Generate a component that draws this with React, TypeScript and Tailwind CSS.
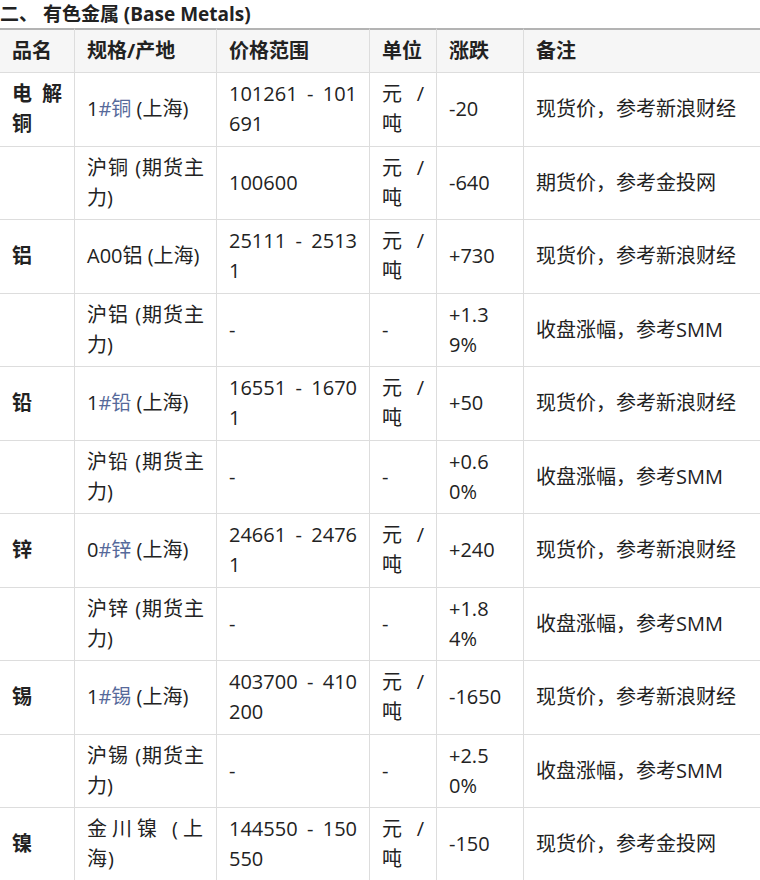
type Row = {
  name: string;
  spec: React.ReactNode;
  price: string;
  unit: string;
  change: string;
  note: string;
};

const Tag = ({ text }: { text: string }) => <span className="text-[#56699a]">{text}</span>;

const rows: Row[] = [
  { name: '电解铜', spec: <>1<Tag text="#铜" /> (上海)</>, price: '101261 - 101691', unit: '元/吨', change: '-20', note: '现货价，参考新浪财经' },
  { name: '', spec: '沪铜 (期货主力)', price: '100600', unit: '元/吨', change: '-640', note: '期货价，参考金投网' },
  { name: '铝', spec: 'A00铝 (上海)', price: '25111 - 25131', unit: '元/吨', change: '+730', note: '现货价，参考新浪财经' },
  { name: '', spec: '沪铝 (期货主力)', price: '-', unit: '-', change: '+1.39%', note: '收盘涨幅，参考SMM' },
  { name: '铅', spec: <>1<Tag text="#铅" /> (上海)</>, price: '16551 - 16701', unit: '元/吨', change: '+50', note: '现货价，参考新浪财经' },
  { name: '', spec: '沪铅 (期货主力)', price: '-', unit: '-', change: '+0.60%', note: '收盘涨幅，参考SMM' },
  { name: '锌', spec: <>0<Tag text="#锌" /> (上海)</>, price: '24661 - 24761', unit: '元/吨', change: '+240', note: '现货价，参考新浪财经' },
  { name: '', spec: '沪锌 (期货主力)', price: '-', unit: '-', change: '+1.84%', note: '收盘涨幅，参考SMM' },
  { name: '锡', spec: <>1<Tag text="#锡" /> (上海)</>, price: '403700 - 410200', unit: '元/吨', change: '-1650', note: '现货价，参考新浪财经' },
  { name: '', spec: '沪锡 (期货主力)', price: '-', unit: '-', change: '+2.50%', note: '收盘涨幅，参考SMM' },
  { name: '镍', spec: <span className="tracking-[1px]">金川镍 (上海)</span>, price: '144550 - 150550', unit: '元/吨', change: '-150', note: '现货价，参考金投网' },
];

const headers = [
  { label: '品名', w: 'w-[75px]' },
  { label: '规格/产地', w: 'w-[142px]' },
  { label: '价格范围', w: 'w-[153px]' },
  { label: '单位', w: 'w-[67px]' },
  { label: '涨跌', w: 'w-[87px]' },
  { label: '备注', w: 'w-[276px]' },
];

export default function App() {
  const cell = 'border-r border-b border-[#dddddd] px-3 py-[6.25px] align-middle text-justify break-all';

  return (
    <div className="w-[760px] h-[880px] overflow-hidden bg-white text-[#222] font-['Open_Sans','Noto_Sans_CJK_SC',sans-serif]">
      {/* Section title */}
      <h2 className="h-[28px] leading-[28px] text-[19px] font-bold whitespace-nowrap">
        二、 有色金属 (Base Metals)
      </h2>

      {/* Price table */}
      <table className="w-[800px] table-fixed border-separate border-spacing-0 text-[20px] leading-[30px]">
        <thead>
          <tr>
            {headers.map((h) => (
              <th
                key={h.label}
                className={`${h.w} bg-[#f6f6f6] border-t-2 border-t-[#b3b3b3] border-r border-b border-[#dddddd] px-3 py-[6px] text-left font-bold`}
              >
                {h.label}
              </th>
            ))}
          </tr>
        </thead>
        <tbody>
          {rows.map((r, i) => (
            <tr key={i}>
              <td className={`${cell} font-bold`}>{r.name}</td>
              <td className={cell}>{r.spec}</td>
              <td className={cell}>{r.price}</td>
              <td className={cell}>{r.unit}</td>
              <td className={cell}>{r.change}</td>
              <td className={cell}>{r.note}</td>
            </tr>
          ))}
        </tbody>
      </table>
    </div>
  );
}
